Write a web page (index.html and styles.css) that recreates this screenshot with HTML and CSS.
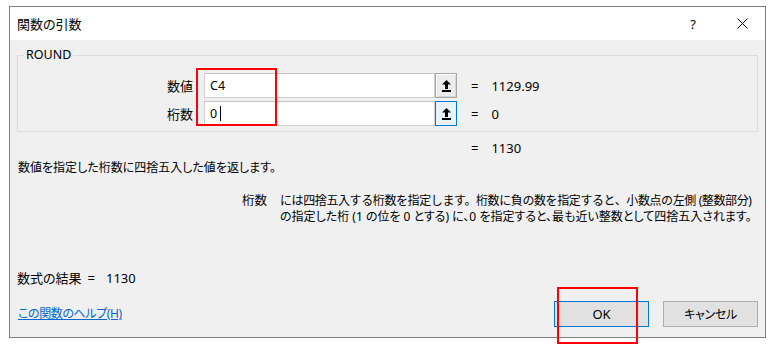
FILE: index.html
```html
<!DOCTYPE html>
<html lang="ja">
<head>
<meta charset="utf-8">
<title>関数の引数</title>
<link rel="stylesheet" href="styles.css">
</head>
<body>
<div class="dialog">
  <div class="titlebar">
    <span class="title ja">関数の引数</span>
    <span class="help-btn">?</span>
    <span class="close-btn"><svg width="11" height="11" viewBox="0 0 11 11"><path d="M0.5 0.5 L10.5 10.5 M10.5 0.5 L0.5 10.5" stroke="#000" stroke-width="1" fill="none"/></svg></span>
  </div>
  <div class="content">
    <fieldset class="group">
      <legend>ROUND</legend>
      <div class="arg-row">
        <span class="arg-label ja">数値</span>
        <div class="field"><span class="field-text">C4</span></div>
        <span class="ref-btn"><svg width="9" height="12" viewBox="0 0 9 12"><path d="M4.5 0 L9 4.5 H6 V9 H3 V4.5 H0 Z" fill="#000"/><rect x="0" y="10" width="9" height="2" fill="#000"/></svg></span>
        <span class="eq">=</span><span class="val">1129.99</span>
      </div>
      <div class="arg-row">
        <span class="arg-label ja">桁数</span>
        <div class="field"><span class="field-text">0</span><span class="caret"></span></div>
        <span class="ref-btn ref-btn-focus"><svg width="9" height="12" viewBox="0 0 9 12"><path d="M4.5 0 L9 4.5 H6 V9 H3 V4.5 H0 Z" fill="#000"/><rect x="0" y="10" width="9" height="2" fill="#000"/></svg></span>
        <span class="eq">=</span><span class="val">0</span>
      </div>
    </fieldset>
    <div class="result-row"><span class="eq">=</span><span class="val">1130</span></div>
    <p class="desc ja">数値を指定した桁数に四捨五入した値を返します。</p>
    <div class="arg-help">
      <span class="arg-help-label ja">桁数</span>
      <div class="arg-help-text">
        <p class="help-line help-line-1">には四捨五入する桁数を指定します。桁数に負の数を指定すると、小数点の左側 (整数部分)</p>
        <p class="help-line ja">の指定した桁 (1 の位を 0 とする) に、0 を指定すると、最も近い整数として四捨五入されます。</p>
      </div>
    </div>
    <div class="formula-result"><span class="ja">数式の結果</span><span class="fr-eq">=</span><span class="fr-val">1130</span></div>
    <div class="footer">
      <a class="help-link ja" href="#">この関数のヘルプ(H)</a>
      <div class="buttons">
        <button class="btn btn-default">OK</button>
        <button class="btn btn-cancel ja">キャンセル</button>
      </div>
    </div>
  </div>
</div>
<div class="mark mark-input"></div>
<div class="mark mark-ok"></div>
</body>
</html>
```

FILE: styles.css
```css
* { box-sizing: border-box; }
html, body { margin: 0; padding: 0; }
body {
  background: #fff;
  font-family: "Noto Sans", "Noto Sans CJK JP", sans-serif;
  font-size: 13px;
  line-height: 16px;
  color: #000;
  position: relative;
  width: 773px;
  height: 352px;
  overflow: hidden;
}
.ja { font-feature-settings: "palt"; }
.dialog {
  margin: 6px 0 0 9px;
  width: 757px;
  height: 332px;
  border: 1px solid #808080;
  background: #f0f0f0;
  display: flex;
  flex-direction: column;
}
.titlebar {
  height: 33px;
  flex: none;
  background: #fff;
  display: flex;
  align-items: center;
  padding-left: 7px;
}
.help-btn {
  margin-left: auto;
  width: 46px;
  text-align: center;
  font-size: 13px;
  margin-right: 3px;
}
.close-btn {
  width: 46px;
  display: flex;
  justify-content: center;
}
.content {
  padding: 0 7px;
  display: flex;
  flex-direction: column;
}
.group {
  margin: 7px 0 0 0;
  padding: 10px 0 5px 0;
  min-width: 0;
  border: 1px solid #dcdcdc;
  display: flex;
  flex-direction: column;
  gap: 3px;
}
.group legend {
  margin-left: 6px;
  padding: 0 2px;
  font-size: 12.5px;
  line-height: 16px;
}
.arg-row {
  display: flex;
  align-items: center;
  height: 25px;
}
.arg-label {
  width: 175px;
  text-align: right;
}
.field {
  margin-left: 11px;
  width: 231px;
  height: 25px;
  background: #fff;
  border: 1px solid #d0d0d0;
  border-top-color: #c4c4c4;
  display: flex;
  align-items: center;
  padding-left: 5px;
  font-size: 12.5px;
}
.caret {
  display: inline-block;
  width: 1px;
  height: 15px;
  background: #000;
  margin-left: 3px;
}
.ref-btn {
  width: 22px;
  height: 25px;
  border: 1px solid #a6a6a6;
  background: #ececec;
  display: flex;
  align-items: center;
  justify-content: center;
  box-shadow: inset 1px 1px 0 #fff, inset -1px -1px 0 #d6d6d6;
}
.ref-btn-focus {
  border-color: #0078d7;
  background: #e8f2fb;
  box-shadow: none;
}
.eq { margin-left: 14px; }
.val { margin-left: 13px; }
.result-row {
  margin-top: 8px;
  height: 16px;
  display: flex;
  padding-left: 440px;
}
.desc {
  margin: 4px 0 0 1px;
  font-size: 12px;
}
.arg-help {
  margin-top: 17px;
  display: flex;
  font-size: 12px;
}
.arg-help-label {
  width: 250px;
  text-align: right;
  flex: none;
  font-size: 12.5px;
  line-height: 16px;
}
.arg-help-text {
  margin-left: 13px;
  white-space: nowrap;
  display: flex;
  flex-direction: column;
}
.help-line {
  margin: 0;
  height: 16px;
  line-height: 16px;
}
.help-line-1 {
  letter-spacing: -0.4px;
}
.formula-result {
  margin: 45px 0 0 0;
  display: flex;
}
.fr-eq { margin-left: 6px; }
.fr-val { margin-left: 11px; }
.footer {
  margin-top: 15px;
  display: flex;
  align-items: center;
  justify-content: space-between;
  padding-left: 1px;
}
.help-link {
  color: #0066cc;
  text-decoration: underline;
  font-size: 12px;
  letter-spacing: -0.4px;
}
.buttons {
  display: flex;
  gap: 14px;
}
.btn {
  width: 95px;
  height: 26px;
  border: 1px solid #adadad;
  background: #e1e1e1;
  font-family: "Noto Sans", "Noto Sans CJK JP", sans-serif;
  font-size: 13px;
  color: #000;
  padding: 0;
}
.btn-cancel {
  font-size: 12px;
  letter-spacing: -0.3px;
}
.btn-default {
  border-color: #0078d7;
}
.mark {
  position: absolute;
  border: 2px solid #ff0000;
}
.mark-input {
  left: 196px;
  top: 68px;
  width: 81px;
  height: 58px;
}
.mark-ok {
  left: 557px;
  top: 287px;
  width: 81px;
  height: 57px;
}
```
